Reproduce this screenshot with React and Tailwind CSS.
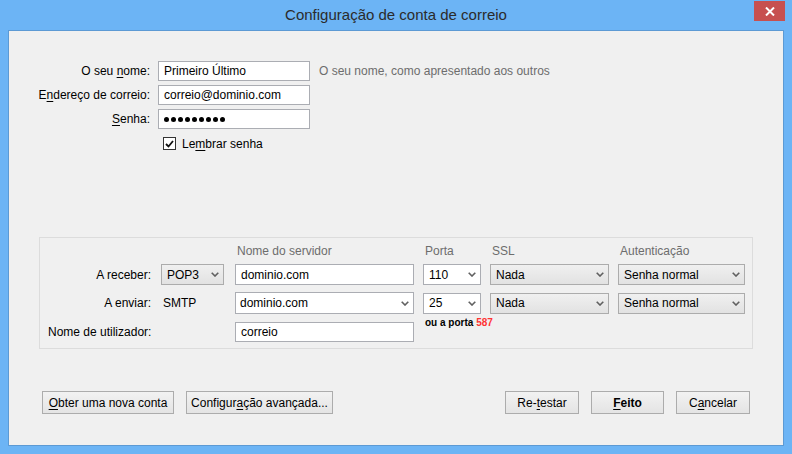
import React from "react";

const Chevron = () => (
  <svg width="8" height="5" viewBox="0 0 8 5" className="shrink-0">
    <path d="M0.7 0.7 L4 4 L7.3 0.7" fill="none" stroke="#606060" strokeWidth="1.6" />
  </svg>
);

function Select({ w, value, combo }) {
  return (
    <div
      className={
        "h-[21px] flex items-center justify-between pl-[5px] pr-[4px] border " +
        (combo
          ? "bg-white border-[#abadb3]"
          : "bg-gradient-to-b from-[#f0f0f0] to-[#e2e2e2] border-[#acacac]")
      }
      style={{ width: w }}
    >
      <span className="leading-none">{value}</span>
      <Chevron />
    </div>
  );
}

function Input({ w, children, h = 20 }) {
  return (
    <div
      className="bg-white border border-[#abadb3] flex items-center px-[5px]"
      style={{ width: w, height: h }}
    >
      {children}
    </div>
  );
}

function Btn({ w, children, bold }) {
  return (
    <div
      className={
        "h-[23px] flex items-center justify-center border border-[#acacac] bg-gradient-to-b from-[#f2f2f2] to-[#e4e4e4] " +
        (bold ? "font-bold" : "")
      }
      style={{ width: w }}
    >
      {children}
    </div>
  );
}

const U = ({ children }) => <span className="underline underline-offset-[2px]">{children}</span>;

export default function App() {
  return (
    <div className="w-[792px] h-[454px] bg-[#6cb4f5] flex flex-col font-['Liberation_Sans',Arial,sans-serif] text-[12px] text-black">
      <div className="h-[30px] relative flex items-center justify-center shrink-0">
        <span className="text-[15px] text-[#2b2b2b] pt-[1px]">Configuração de conta de correio</span>
        <div className="absolute top-[1px] right-[7px] w-[31px] h-[20px] bg-[#c75050] flex items-center justify-center">
          <svg width="10" height="9" viewBox="0 0 10 9">
            <path d="M1 0.5 L9 8.5 M9 0.5 L1 8.5" stroke="white" strokeWidth="2" />
          </svg>
        </div>
      </div>
      <div className="mx-[8px] mb-[8px] flex-1 bg-[#f0f0f0] border border-[#5c9ad4] flex flex-col">
        {/* top form */}
        <div className="pt-[30px] grid grid-cols-[141px_152px_1fr] gap-x-[8px] gap-y-[4px] items-center">
          <div className="text-right">O seu <U>n</U>ome:</div>
          <Input w={152}>Primeiro Último</Input>
          <div className="text-[#6d6d6d] pl-[1px]">O seu nome, como apresentado aos outros</div>

          <div className="text-right">E<U>n</U>dereço de correio:</div>
          <Input w={152}>correio@dominio.com</Input>
          <div />

          <div className="text-right"><U>S</U>enha:</div>
          <Input w={152}>
            <div className="flex gap-[2px]">
              {Array.from({ length: 9 }).map((_, i) => (
                <div key={i} className="w-[5px] h-[5px] rounded-full bg-black" />
              ))}
            </div>
          </Input>
          <div />
        </div>
        <div className="mt-[8px] ml-[154px] flex items-center gap-[6px] h-[13px]">
          <div className="w-[13px] h-[13px] bg-white border border-[#333] flex items-center justify-center">
            <svg width="9" height="8" viewBox="0 0 9 8">
              <path d="M1 4 L3.5 6.5 L8 1" fill="none" stroke="#111" strokeWidth="1.8" />
            </svg>
          </div>
          <span>Le<U>m</U>brar senha</span>
        </div>

        {/* group box */}
        <div className="mt-[87px] ml-[30px] w-[714px] h-[112px] border border-[#dcdcdc] pt-[4px]">
          <div className="grid grid-cols-[121px_74px_188px_67px_128px_127px] items-center">
            <div className="h-[18px]" />
            <div />
            <div className="text-[#6d6d6d] pl-[2px] h-[18px] leading-[18px]">Nome do servidor</div>
            <div className="text-[#6d6d6d] pl-[2px]">Porta</div>
            <div className="text-[#6d6d6d] pl-[2px]">SSL</div>
            <div className="text-[#6d6d6d] pl-[2px]">Autenticação</div>
          </div>
          <div className="mt-[4px] grid grid-cols-[121px_74px_188px_67px_128px_127px] items-center">
            <div className="text-right pr-[10px]">A receber:</div>
            <Select w={63} value="POP3" />
            <Input w={179} h={21}>dominio.com</Input>
            <Select w={58} value="110" combo />
            <Select w={119} value="Nada" />
            <Select w={127} value="Senha normal" />
          </div>
          <div className="mt-[7px] grid grid-cols-[121px_74px_188px_67px_128px_127px] items-center">
            <div className="text-right pr-[10px]">A enviar:</div>
            <div className="pl-[2px]">SMTP</div>
            <div
              className="h-[22px] w-[179px] flex items-center justify-between pl-[4px] pr-[4px] border bg-white border-[#abadb3]"
            >
              <span>dominio.com</span>
              <Chevron />
            </div>
            <Select w={58} value="25" combo />
            <Select w={119} value="Nada" />
            <Select w={127} value="Senha normal" />
          </div>
          <div className="mt-[8px] grid grid-cols-[195px_188px_1fr] items-start">
            <div className="pl-[8px] h-[20px] flex items-center">Nome de utilizador:</div>
            <Input w={179}>correio</Input>
            <div className="pl-[2px] text-[10px] font-bold leading-none -mt-[4px]">
              ou a porta <span className="text-[#ff3333]">587</span>
            </div>
          </div>
        </div>

        {/* buttons */}
        <div className="mt-[42px] px-[33px] flex justify-between">
          <div className="flex gap-[12px]">
            <Btn w={132}><span><U>O</U>bter uma nova conta</span></Btn>
            <Btn w={147}><span>Configur<U>a</U>ção avançada...</span></Btn>
          </div>
          <div className="flex gap-[12px]">
            <Btn w={74}><span>Re-<U>t</U>estar</span></Btn>
            <Btn w={73} bold><span><U>F</U>eito</span></Btn>
            <Btn w={74}><span>C<U>a</U>ncelar</span></Btn>
          </div>
        </div>
      </div>
    </div>
  );
}
